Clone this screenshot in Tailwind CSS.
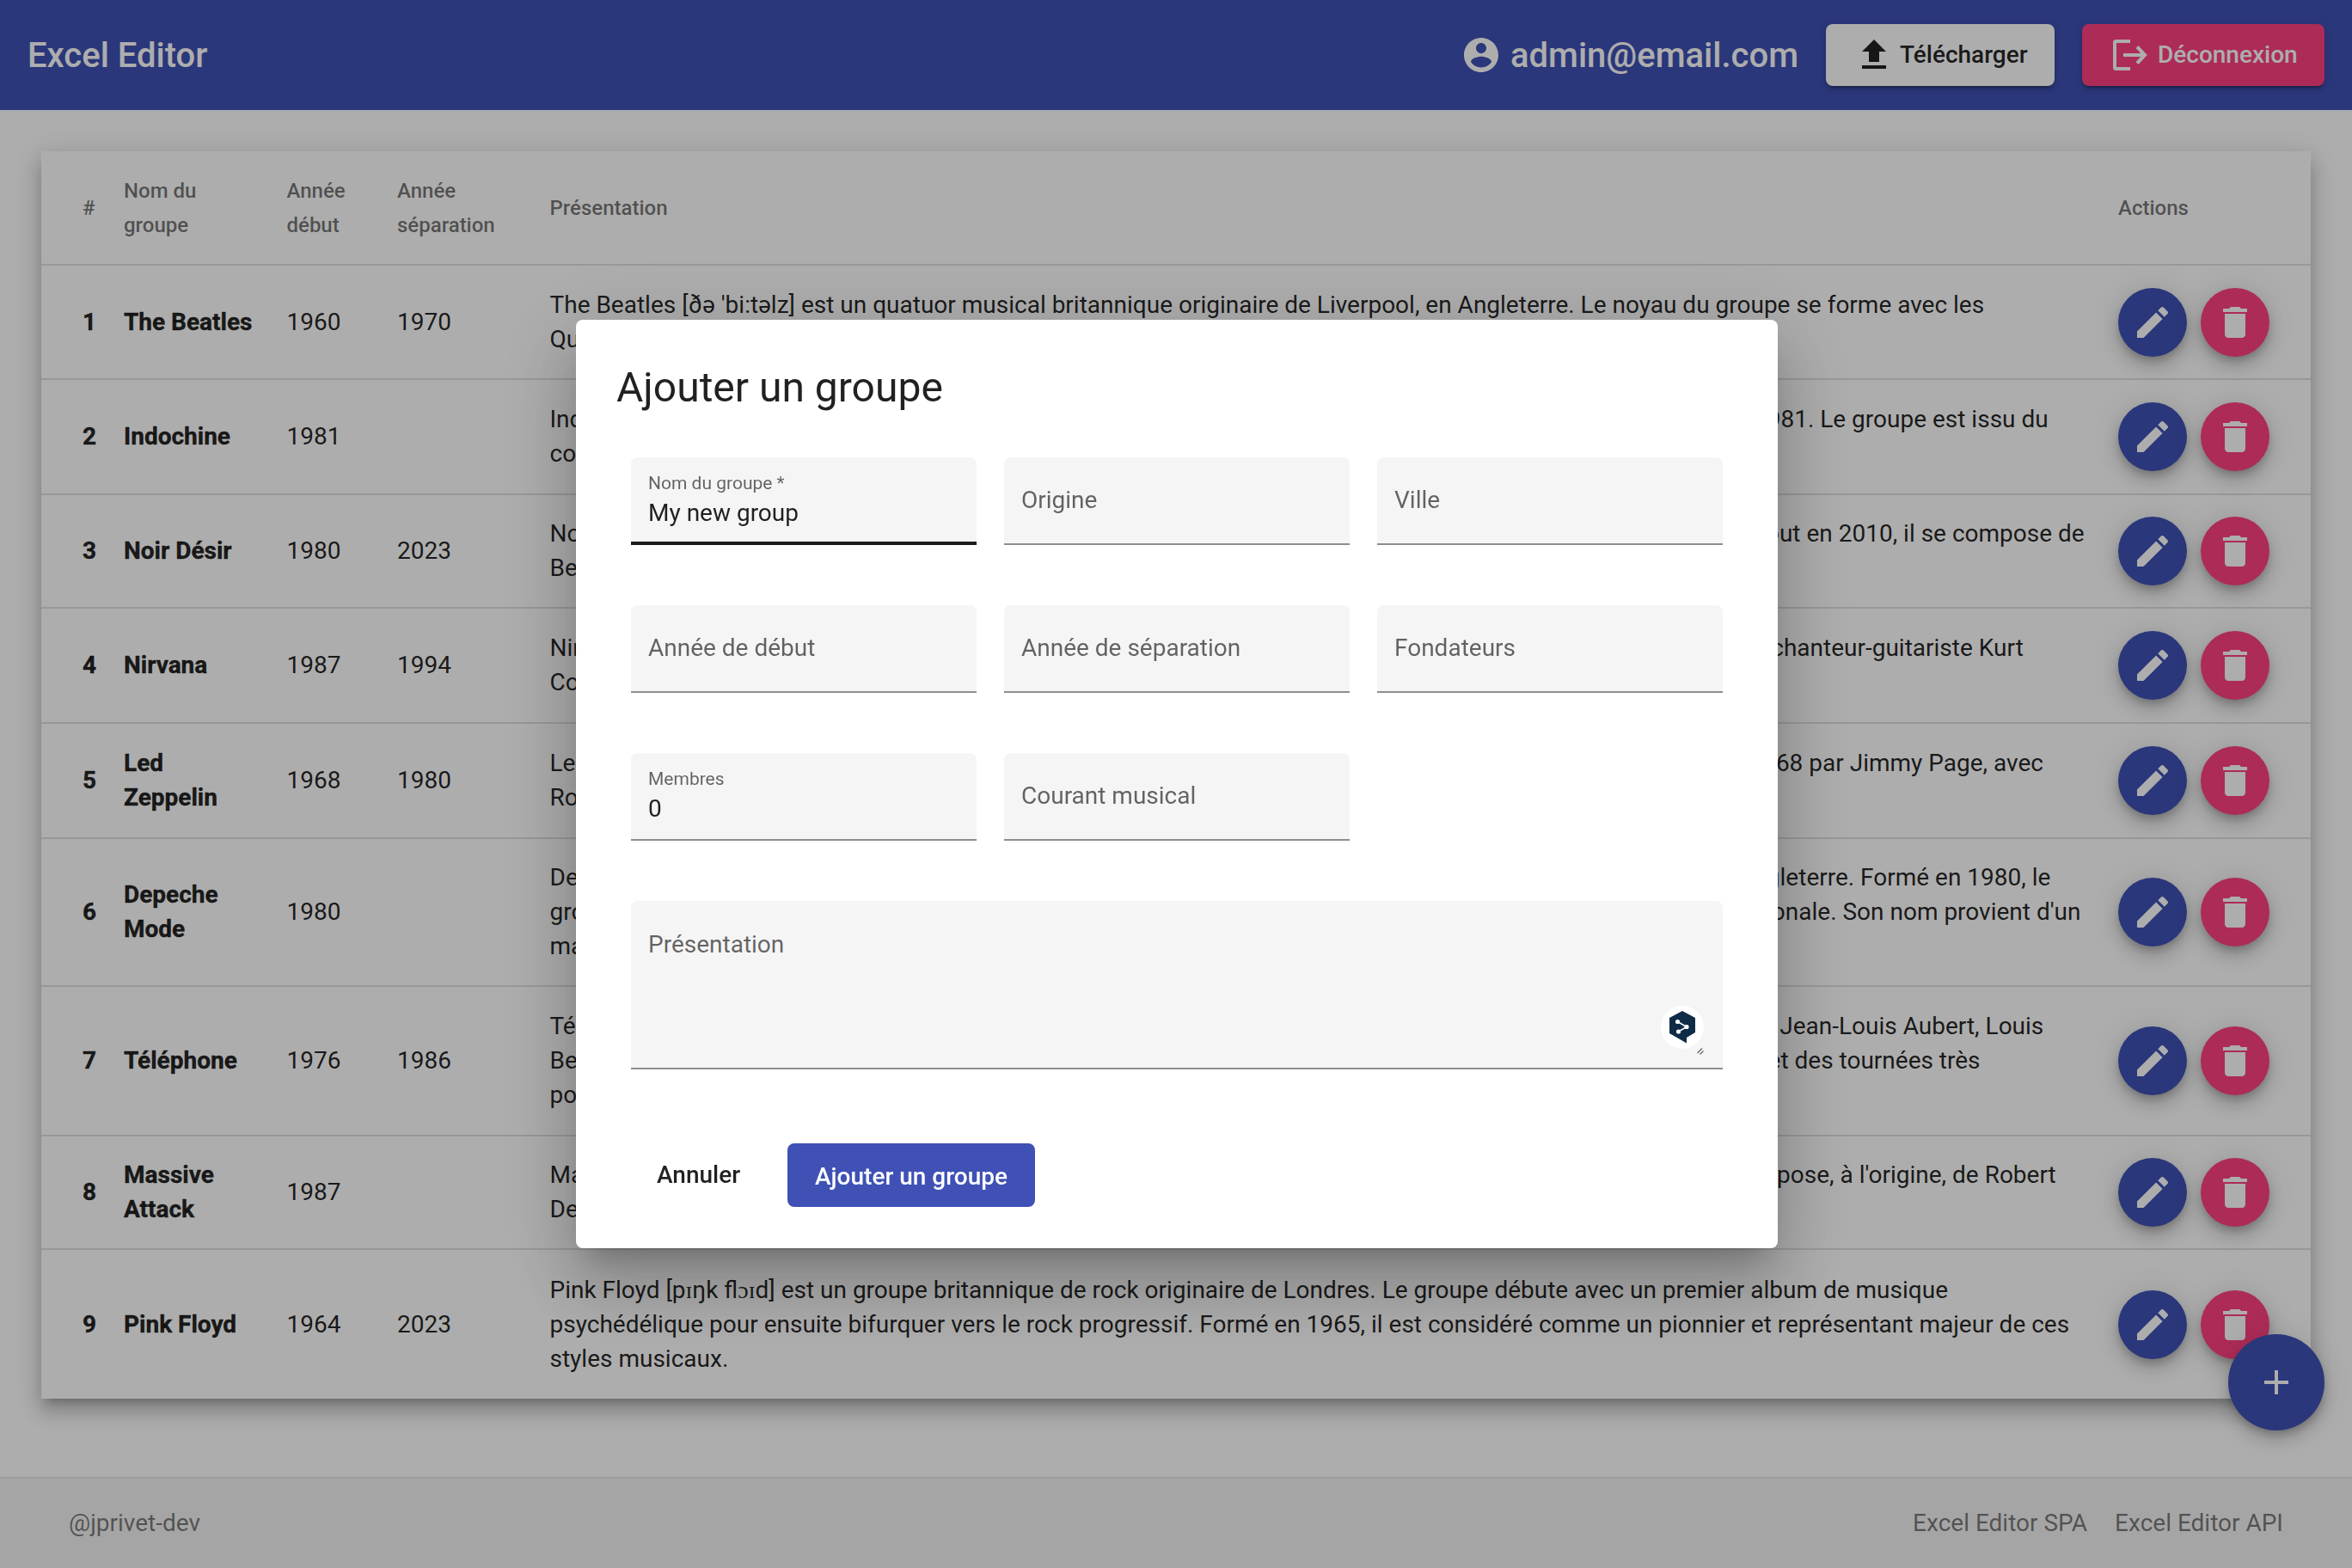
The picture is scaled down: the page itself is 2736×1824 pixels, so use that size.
<!DOCTYPE html>
<html lang="fr">
<head>
    <meta charset="UTF-8">
    <title>Excel Editor</title>
    <script src="https://cdn.jsdelivr.net/npm/@tailwindcss/browser@4"></script>
</head>
<body class="h-screen overflow-hidden bg-white font-[family-name:Roboto] text-black/87 text-[28px] leading-[40px]">
    <div class="h-screen flex flex-col overflow-hidden">

        <!-- Toolbar -->
        <header class="h-32 shrink-0 bg-[#3f51b5] text-white flex items-center px-8">
            <span class="pt-[2px] text-[40px] leading-[48px] font-medium">Excel Editor</span>
            <div class="ml-auto mr-[2px] flex items-center">
                <svg class="w-12 h-12" viewBox="0 0 24 24" fill="currentColor"><path d="M12 2C6.48 2 2 6.48 2 12s4.48 10 10 10 10-4.48 10-10S17.52 2 12 2zm0 3c1.66 0 3 1.34 3 3s-1.34 3-3 3-3-1.34-3-3 1.34-3 3-3zm0 14.2c-2.5 0-4.71-1.28-6-3.22.03-1.99 4-3.08 6-3.08 1.99 0 5.97 1.09 6 3.08-1.29 1.94-3.5 3.22-6 3.22z"/></svg>
                <span class="ml-[10px] pt-[2px] text-[40px] leading-[48px] font-medium">admin@email.com</span>
            </div>
            <button class="ml-[30px] h-[72px] w-[266px] pl-8 bg-white text-black/87 rounded-lg flex items-center gap-1.5 font-medium shadow-[0_6px_2px_-4px_rgba(0,0,0,.2),0_4px_4px_0_rgba(0,0,0,.14),0_2px_10px_0_rgba(0,0,0,.12)]">
                <svg class="w-12 h-12" viewBox="0 0 24 24" fill="currentColor"><path d="M9 16h6v-6h4l-7-7-7 7h4v6zm-4 2h14v2H5v-2z"/></svg>
                Télécharger
            </button>
            <button class="ml-8 h-[72px] w-[282px] pl-9 bg-[#ff4081] text-white rounded-lg flex items-center gap-3 font-medium shadow-[0_6px_2px_-4px_rgba(0,0,0,.2),0_4px_4px_0_rgba(0,0,0,.14),0_2px_10px_0_rgba(0,0,0,.12)]">
                <svg class="w-10 h-9" viewBox="0 0 40 36" fill="none" stroke="currentColor" stroke-width="4"><path d="M20 2H3.500a1.500 1.500 0 0 0-1.500 1.500v29a1.500 1.500 0 0 0 1.500 1.500H20"/><path d="M12 18H37M28 8.500l9 9.500-9 9.500"/></svg>
                Déconnexion
            </button>
        </header>

        <!-- Groups table -->
        <main class="flex-1 min-h-0 px-12 pt-12">
            <div class="bg-white shadow-[0_10px_10px_-6px_rgba(0,0,0,.2),0_16px_20px_2px_rgba(0,0,0,.14),0_6px_28px_4px_rgba(0,0,0,.12)]">
                <table class="w-full table-fixed border-separate border-spacing-0">
                    <colgroup>
                        <col class="w-[96px]"><col class="w-[189.5px]"><col class="w-[128.5px]"><col class="w-[177.5px]"><col class="w-[1824.5px]"><col class="w-[224px]">
                    </colgroup>
                    <thead>
                        <tr class="h-[133px] text-[24px] font-medium text-black/54 text-left">
                            <th class="pl-12 font-medium border-b-2 border-black/12">#</th>
                            <th class="pr-8 font-medium border-b-2 border-black/12">Nom du groupe</th>
                            <th class="pr-8 font-medium border-b-2 border-black/12">Année début</th>
                            <th class="pr-8 font-medium border-b-2 border-black/12">Année séparation</th>
                            <th class="font-medium border-b-2 border-black/12">Présentation</th>
                            <th class="font-medium border-b-2 border-black/12">Actions</th>
                        </tr>
                    </thead>
                    <tbody id="rows"></tbody>
                </table>
            </div>
        </main>

        <footer class="h-[106px] shrink-0 bg-[#f4f4f4] border-t-2 border-gray-200 px-20 flex items-center justify-between text-black/50">
            <span>@jprivet-dev</span>
            <div class="flex gap-8">
                <span>Excel Editor SPA</span>
                <span>Excel Editor API</span>
            </div>
        </footer>
    </div>

    <button class="fixed right-8 bottom-[160px] w-28 h-28 rounded-full bg-[#3f51b5] text-white flex items-center justify-center shadow-[0_6px_10px_-2px_rgba(0,0,0,.2),0_12px_20px_0_rgba(0,0,0,.14),0_2px_36px_0_rgba(0,0,0,.12)]">
        <svg class="w-12 h-12" viewBox="0 0 24 24" fill="currentColor"><path d="M19 13h-6v6h-2v-6H5v-2h6V5h2v6h6v2z"/></svg>
    </button>

    <!-- Dialog -->
    <div class="fixed inset-0 pl-[2px] bg-black/32 flex items-center justify-center">
        <div class="w-[1398px] h-[1080px] bg-white rounded-lg px-12 shadow-[0_22px_30px_-14px_rgba(0,0,0,.2),0_48px_76px_6px_rgba(0,0,0,.14),0_18px_92px_16px_rgba(0,0,0,.12)]">
            <h2 class="h-[160px] pb-[2px] -ml-px flex items-center text-[48px] leading-[64px]">Ajouter un groupe</h2>
            <div class="mx-4 grid grid-cols-3 gap-x-8 gap-y-[70px]">
                <div class="h-[102px] bg-[#f5f5f5] rounded-t-lg border-b-4 border-[#1c1c1c] px-5 pt-4">
                    <div class="text-[21px] leading-[28px] text-black/60">Nom du groupe *</div>
                    <div class="mt-px">My new group</div>
                </div>
                <div class="h-[102px] bg-[#f5f5f5] rounded-t-lg border-b-2 border-[#8e8e8e] px-5 flex items-center text-black/60">Origine</div>
                <div class="h-[102px] bg-[#f5f5f5] rounded-t-lg border-b-2 border-[#8e8e8e] px-5 flex items-center text-black/60">Ville</div>
                <div class="h-[102px] bg-[#f5f5f5] rounded-t-lg border-b-2 border-[#8e8e8e] px-5 flex items-center text-black/60">Année de début</div>
                <div class="h-[102px] bg-[#f5f5f5] rounded-t-lg border-b-2 border-[#8e8e8e] px-5 flex items-center text-black/60">Année de séparation</div>
                <div class="h-[102px] bg-[#f5f5f5] rounded-t-lg border-b-2 border-[#8e8e8e] px-5 flex items-center text-black/60">Fondateurs</div>
                <div class="h-[102px] bg-[#f5f5f5] rounded-t-lg border-b-2 border-[#8e8e8e] px-5 pt-4">
                    <div class="text-[21px] leading-[28px] text-black/60">Membres</div>
                    <div class="mt-px">0</div>
                </div>
                <div class="h-[102px] bg-[#f5f5f5] rounded-t-lg border-b-2 border-[#8e8e8e] px-5 flex items-center text-black/60">Courant musical</div>
                <div></div>
                <div class="col-span-3 relative h-[196px] bg-[#f5f5f5] rounded-t-lg border-b-2 border-[#8e8e8e] px-5 pt-[31px] text-black/60">
                    Présentation
                    <!-- DeepL widget and resize handle sit over the textarea -->
                    <svg class="absolute left-[1198px] top-[122px] w-[50px] h-[50px]" viewBox="0 0 50 50">
                        <circle cx="25" cy="25" r="25" fill="#fff"/>
                        <path d="M25 6L40 14V31L30 37V43.500L10 32V14Z" fill="#0f2b46"/>
                        <path d="M19.500 18.500L30 24.500L20.500 30" fill="none" stroke="#fff" stroke-width="1.500"/>
                        <circle cx="19.500" cy="18.500" r="2.600" fill="#fff"/><circle cx="30" cy="24.500" r="2.600" fill="#fff"/><circle cx="20.500" cy="30" r="2.600" fill="#fff"/>
                    </svg>
                    <svg class="absolute left-[1240px] top-[171px] w-2 h-2" viewBox="0 0 8 8" stroke="#666" stroke-width="1.200"><path d="M0.500 6L6 0.500M3.500 7.500L7.500 3.500"/></svg>
                </div>
            </div>
            <div class="mx-4 mt-[86px] flex items-center font-medium">
                <button class="h-[74px] w-[182px] text-left pl-[30px]">Annuler</button>
                <button class="h-[74px] w-[288px] bg-[#3f51b5] text-white rounded-lg pt-[3px]">Ajouter un groupe</button>
            </div>
        </div>
    </div>

    <script>
        const groups = [
            [133, "1", "The Beatles", "1960", "1970", "The Beatles [ðə 'bi:təlz] est un quatuor musical britannique originaire de Liverpool, en Angleterre. Le noyau du groupe se forme avec les<br>Quarrymen, fondé par John Lennon en 1956."],
            [134, "2", "Indochine", "1981", "", "Indochine est un groupe de rock français, originaire de Paris. Fondé par Nicola Sirkis et Dominique Nicolas début 1981. Le groupe est issu du<br>courant new wave et connaît un grand succès durant les années 1980."],
            [132, "3", "Noir Désir", "1980", "2023", "Noir Désir est un groupe de rock français originaire de Bordeaux. Formé en 1980 et séparé en 2003, puis enfin dissout en 2010, il se compose de<br>Bertrand Cantat, Serge Teyssot-Gay, Denis Barthe et Jean-Paul Roy."],
            [134, "4", "Nirvana", "1987", "1994", "Nirvana est un groupe de grunge américain, originaire d'Aberdeen dans l'État de Washington. Formé en 1987 par le chanteur-guitariste Kurt<br>Cobain et le bassiste Krist Novoselic."],
            [134, "5", "Led Zeppelin", "1968", "1980", "Led Zeppelin est un groupe de rock britannique, originaire de Londres, en Angleterre. Il a été fondé en septembre 1968 par Jimmy Page, avec<br>Robert Plant, John Paul Jones et John Bonham."],
            [172, "6", "Depeche Mode", "1980", "", "Depeche Mode est un groupe de musique rock électronique britannique, originaire de Basildon, dans l'Essex, en Angleterre. Formé en 1980, le<br>groupe est rapidement à l'origine de la synthpop britannique et connaît ensuite une très grande renommée internationale. Son nom provient d'un<br>magazine de mode français."],
            [174, "7", "Téléphone", "1976", "1986", "Téléphone est un groupe de rock français, originaire de Paris, en Île-de-France. Formé début 1976, il se compose de Jean-Louis Aubert, Louis<br>Bertignac, Corine Marienneau et Richard Kolinka. Le groupe enchaîne alors de nombreux albums studios à succès et des tournées très<br>populaires en France."],
            [132, "8", "Massive Attack", "1987", "", "Massive Attack est un groupe de trip hop britannique, originaire de Bristol, en Angleterre. Formé dès 1987, il se compose, à l'origine, de Robert<br>Del Naja, Grant Marshall et Andrew Vowles."],
            [173, "9", "Pink Floyd", "1964", "2023", "Pink Floyd [pɪŋk flɔɪd] est un groupe britannique de rock originaire de Londres. Le groupe débute avec un premier album de musique<br>psychédélique pour ensuite bifurquer vers le rock progressif. Formé en 1965, il est considéré comme un pionnier et représentant majeur de ces<br>styles musicaux."],
        ];

        const rows = document.getElementById("rows");
        groups.forEach((g, i) => {
            const line = i < groups.length - 1 ? "border-b-2 border-black/12" : "";
            const tr = document.createElement("tr");
            tr.style.height = g[0] + "px";
            tr.innerHTML = `
                <td class="pl-12 font-bold [-webkit-text-stroke:0.4px] ${line}">${g[1]}</td>
                <td class="pr-8 font-bold [-webkit-text-stroke:0.4px] ${line}">${g[2]}</td>
                <td class="${line}">${g[3]}</td>
                <td class="${line}">${g[4]}</td>
                <td class="${line}">${g[5]}</td>
                <td class="${line}">
                    <div class="flex gap-4">
                        <button class="w-20 h-20 rounded-full bg-[#3f51b5] text-white flex items-center justify-center shadow-[0_6px_10px_-2px_rgba(0,0,0,.2),0_12px_20px_0_rgba(0,0,0,.14),0_2px_36px_0_rgba(0,0,0,.12)]">
                            <svg class="w-12 h-12" viewBox="0 0 24 24" fill="currentColor"><path d="M3 17.250V21h3.750L17.810 9.940l-3.750-3.750L3 17.250zM20.710 7.040c.39-.39.39-1.020 0-1.410l-2.340-2.340c-.39-.39-1.020-.39-1.410 0l-1.830 1.830 3.750 3.750 1.830-1.830z"/></svg>
                        </button>
                        <button class="w-20 h-20 rounded-full bg-[#ff4081] text-white flex items-center justify-center shadow-[0_6px_10px_-2px_rgba(0,0,0,.2),0_12px_20px_0_rgba(0,0,0,.14),0_2px_36px_0_rgba(0,0,0,.12)]">
                            <svg class="w-12 h-12" viewBox="0 0 24 24" fill="currentColor"><path d="M6 19c0 1.100.9 2 2 2h8c1.100 0 2-.9 2-2V7H6v12zM19 4h-3.500l-1-1h-5l-1 1H5v2h14V4z"/></svg>
                        </button>
                    </div>
                </td>`;
            rows.appendChild(tr);
        });
    </script>
</body>
</html>
